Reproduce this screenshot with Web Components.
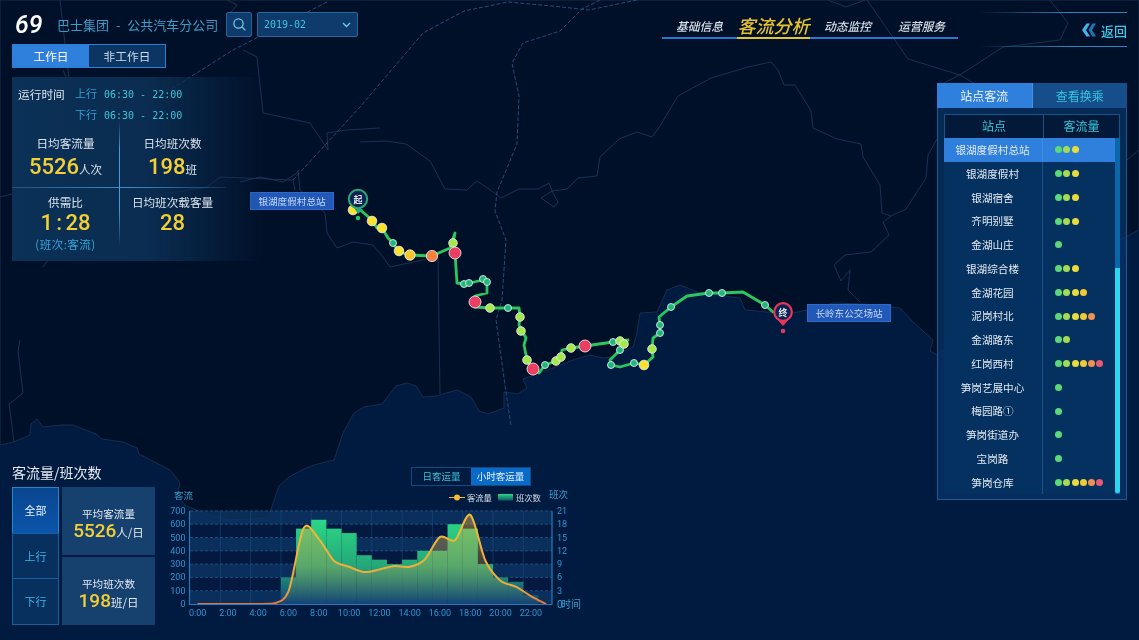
<!DOCTYPE html>
<html lang="zh">
	<head>
		<meta charset="utf-8">
		<title>69 客流分析</title>
		<style>
			html, body {
				margin: 0;
				padding: 0;
				background: #001a40;
			}
		</style>
	</head>

	<body>
		<bus-dashboard>
			<route-map slot="map"></route-map>

			<div slot="left-top">
				<line-header line="69" company="巴士集团 - 公共汽车分公司" month="2019-02"></line-header>
				<day-tabs></day-tabs>
				<info-panel></info-panel>
			</div>

			<flow-summary slot="left-bottom"></flow-summary>
			<flow-chart slot="left-bottom"></flow-chart>

			<top-nav slot="right-top"></top-nav>
			<back-link slot="right-top"></back-link>

			<station-panel slot="right">
				<station-row name="银湖度假村总站" level="3" active></station-row>
				<station-row name="银湖度假村" level="3"></station-row>
				<station-row name="银湖宿舍" level="3"></station-row>
				<station-row name="齐明别墅" level="3"></station-row>
				<station-row name="金湖山庄" level="1"></station-row>
				<station-row name="银湖综合楼" level="3"></station-row>
				<station-row name="金湖花园" level="4"></station-row>
				<station-row name="泥岗村北" level="5"></station-row>
				<station-row name="金湖路东" level="2"></station-row>
				<station-row name="红岗西村" level="6"></station-row>
				<station-row name="笋岗艺展中心" level="1"></station-row>
				<station-row name="梅园路①" level="1"></station-row>
				<station-row name="笋岗街道办" level="1"></station-row>
				<station-row name="宝岗路" level="1"></station-row>
				<station-row name="笋岗仓库" level="6"></station-row>
			</station-panel>
		</bus-dashboard>
	</body>

	<script>
		const FONT = '"Noto Sans CJK SC", "Liberation Sans", sans-serif';
		const NUM_FONT = 'Roboto, "Liberation Sans", "Noto Sans CJK SC", sans-serif';
		const MONO_FONT = '"DejaVu Sans Mono", "Liberation Mono", monospace';

		class BusDashboard extends HTMLElement {
			constructor() {
				super();
				this.attachShadow({ mode: 'open' }).innerHTML = `
					<style>
						:host {
							display: block;
							position: relative;
							width: 1139px;
							height: 640px;
							overflow: hidden;
							font-family: ${FONT};
							color: #e4ebf2;
							outline: 1px solid #8a9098;
							outline-offset: -1px;
							filter: blur(0.4px);
						}
						.page {
							position: relative;
							box-sizing: border-box;
							height: 640px;
							padding: 12px 12px 15px;
							display: flex;
							justify-content: space-between;
						}
						.left {
							display: flex;
							flex-direction: column;
							justify-content: space-between;
						}
						.bottom {
							display: flex;
							align-items: flex-end;
							gap: 10px;
						}
						.right {
							width: 465px;
							display: flex;
							flex-direction: column;
							align-items: flex-end;
						}
						.right-top {
							align-self: stretch;
							display: flex;
							justify-content: space-between;
							margin-bottom: 36px;
						}
					</style>
					<slot name="map"></slot>
					<div class="page">
						<div class="left">
							<div><slot name="left-top"></slot></div>
							<div class="bottom"><slot name="left-bottom"></slot></div>
						</div>
						<div class="right">
							<div class="right-top"><slot name="right-top"></slot></div>
							<slot name="right"></slot>
						</div>
					</div>
				`;
			}
		}

		class LineHeader extends HTMLElement {
			connectedCallback() {
				this.attachShadow({ mode: 'open' }).innerHTML = `
					<style>
						:host {
							display: flex;
							align-items: center;
							height: 25px;
						}
						.line {
							width: 45px;
							padding-left: 3px;
							box-sizing: border-box;
							font: italic 500 25px ${NUM_FONT};
							color: #fff;
						}
						.company {
							width: 169px;
							font-size: 13px;
							word-spacing: 4px;
							white-space: pre;
							color: #3a9cc8;
						}
						button {
							box-sizing: border-box;
							height: 25px;
							background: #0e3b6c;
							border: 1px solid #23679f;
							border-radius: 2px;
							padding: 0;
							display: flex;
							align-items: center;
						}
						.search {
							width: 26px;
							justify-content: center;
							margin-right: 5px;
						}
						.month {
							width: 101px;
							justify-content: space-between;
							padding: 0 6px;
							font: 10px ${MONO_FONT};
							color: #3cc6e2;
						}
					</style>
					<div class="line">${this.getAttribute('line')}</div>
					<div class="company">${this.getAttribute('company')}</div>
					<button class="search">
						<svg width="15" height="15" viewBox="0 0 15 15" fill="none" stroke="#6fc6ea" stroke-width="1.3">
							<circle cx="6.5" cy="6.5" r="4.6"></circle>
							<path d="M10 10l3.4 3.4"></path>
						</svg>
					</button>
					<button class="month">
						<span>${this.getAttribute('month')}</span>
						<svg width="9" height="6" viewBox="0 0 9 6" fill="none" stroke="#6fc6ea" stroke-width="1.4">
							<path d="M1 1l3.5 3.5L8 1"></path>
						</svg>
					</button>
				`;
			}
		}

		class DayTabs extends HTMLElement {
			constructor() {
				super();
				this.attachShadow({ mode: 'open' }).innerHTML = `
					<style>
						:host {
							display: flex;
							box-sizing: border-box;
							width: 154px;
							height: 24px;
							margin-top: 7px;
							border: 1px solid #2c7fd6;
							font-size: 11.7px;
							line-height: 22px;
							text-align: center;
						}
						div {
							flex: 1;
							background: #0c3563;
							color: #c8dcec;
						}
						.on {
							background: #2f7fdc;
							color: #fff;
						}
					</style>
					<div class="on">工作日</div>
					<div>非工作日</div>
				`;
			}
		}

		class StatCell extends HTMLElement {
			connectedCallback() {
				const note = this.getAttribute('note');
				this.attachShadow({ mode: 'open' }).innerHTML = `
					<style>
						:host {
							display: block;
							text-align: center;
						}
						.label {
							font-size: 11.6px;
							line-height: 16px;
							color: #dbe5ee;
						}
						.value {
							margin-top: var(--value-gap, 0);
							font: 500 22px/26px ${NUM_FONT};
							word-spacing: -2px;
							color: #f3cf35;
							white-space: nowrap;
						}
						.unit {
							font: 11.5px ${FONT};
							color: #dbe5ee;
						}
						.note {
							font-size: 11.5px;
							letter-spacing: .5px;
							line-height: 16px;
							color: #36a4d6;
						}
					</style>
					<div class="label">${this.getAttribute('label')}</div>
					<div class="value">${this.getAttribute('value')}<span class="unit">${this.getAttribute('unit') || ''}</span></div>
					${note ? `<div class="note">${note}</div>` : ''}
				`;
			}
		}

		class InfoPanel extends HTMLElement {
			constructor() {
				super();
				this.attachShadow({ mode: 'open' }).innerHTML = `
					<style>
						:host {
							display: block;
							position: relative;
							box-sizing: border-box;
							width: 250px;
							height: 184px;
							margin-top: 9px;
							padding: 6px 0 0 6px;
							background: linear-gradient(90deg, #0b3156 0%, #0a2c50 55%, rgba(8, 36, 70, 0) 100%);
							font-size: 11px;
						}
						.time {
							display: grid;
							grid-template-columns: 57px auto;
							grid-auto-rows: 21px;
							line-height: 21px;
						}
						.time b {
							font-weight: 400;
							font-size: 11.7px;
							color: #dbe5ee;
						}
						.time span {
							grid-column: 2;
							color: #2f9bd0;
						}
						.time i {
							font: normal 10px/21px ${MONO_FONT};
							color: #3cc6da;
							margin-left: 7px;
						}
						.stats {
							position: absolute;
							left: 0;
							top: 44px;
							width: 214px;
							display: grid;
							grid-template-columns: 107px 107px;
							grid-template-rows: 66px 74px;
							background:
								linear-gradient(180deg, rgba(80, 160, 220, 0), #4a9ad4 22%, #4a9ad4 70%, rgba(80, 160, 220, 0)) 107px 0 / 1px 126px no-repeat,
								linear-gradient(90deg, rgba(80, 160, 220, .3), #3f8cc8 50%, rgba(80, 160, 220, 0)) 0 66px / 236px 1px no-repeat;
						}
						stat-cell {
							padding-top: 14px;
							--value-gap: 3px;
						}
						stat-cell:nth-child(n + 3) {
							padding-top: 7px;
							--value-gap: 0;
						}
					</style>
					<div class="time">
						<b>运行时间</b>
						<span style="grid-row:1">上行<i>06:30 - 22:00</i></span>
						<span>下行<i>06:30 - 22:00</i></span>
					</div>
					<div class="stats">
						<stat-cell label="日均客流量" value="5526" unit="人次"></stat-cell>
						<stat-cell label="日均班次数" value="198" unit="班"></stat-cell>
						<stat-cell label="供需比" value="1 : 28" note="(班次:客流)"></stat-cell>
						<stat-cell label="日均班次载客量" value="28"></stat-cell>
					</div>
				`;
			}
		}

		class TopNav extends HTMLElement {
			constructor() {
				super();
				this.attachShadow({ mode: 'open' }).innerHTML = `
					<style>
						:host {
							display: flex;
							width: 296px;
							height: 27px;
							font-style: italic;
							font-size: 11.8px;
							font-weight: 500;
							text-align: center;
							line-height: 28px;
							color: #d6dee6;
						}
						div {
							box-sizing: border-box;
							width: 75px;
							border-bottom: 2px solid #2b77d0;
							white-space: nowrap;
						}
						.on {
							width: 73px;
							font-size: 18px;
							line-height: 27px;
							color: #e6c22c;
							border-bottom-color: #e6c22c;
						}
						.last {
							width: 73px;
						}
					</style>
					<div>基础信息</div>
					<div class="on">客流分析</div>
					<div>动态监控</div>
					<div class="last">运营服务</div>
				`;
			}
		}

		class BackLink extends HTMLElement {
			constructor() {
				super();
				this.attachShadow({ mode: 'open' }).innerHTML = `
					<style>
						:host {
							display: flex;
							box-sizing: border-box;
							width: 147px;
							height: 35px;
							align-items: center;
							justify-content: flex-end;
							gap: 5px;
							border-style: solid;
							border-width: 1px 0;
							border-image: linear-gradient(90deg, rgba(40, 130, 190, 0), #2a86bc 60%) 1;
							font-size: 13px;
							font-weight: 500;
							color: #3cc8e8;
							padding-top: 1px;
						}
					</style>
					<svg width="14" height="14" viewBox="0 0 14 14">
						<path d="M10.500 .5H14L10 7l4 6.500h-3.500L6.500 7z" fill="#1b78b8"></path>
						<path d="M4.500 .5H8L4 7l4 6.500H4.500L0 7z" fill="#45b4ea"></path>
					</svg>
					<span>返回</span>
				`;
			}
		}

		class StationRow extends HTMLElement {
			connectedCallback() {
				const colors = ['#5bd877', '#a4dc50', '#e9dc38', '#f3c836', '#ee9450', '#e65a72'];
				const level = parseInt(this.getAttribute('level'));
				const dots = colors.slice(0, level).map((c) => `<i style="background:${c}"></i>`).join('');
				this.attachShadow({ mode: 'open' }).innerHTML = `
					<style>
						:host {
							display: flex;
							height: 23.75px;
							line-height: 23.75px;
							font-size: 10.6px;
							color: #e2e9f0;
						}
						:host([active]) {
							background: #2f7fdc;
						}
						.name {
							box-sizing: border-box;
							width: 99px;
							padding-right: 1px;
							text-align: center;
							border-right: 1px solid #14568c;
						}
						:host([active]) .name {
							border-right-color: #3e8ce4;
						}
						.dots {
							display: flex;
							align-items: center;
							gap: 1.300px;
							padding-left: 12px;
						}
						i {
							width: 7px;
							height: 7px;
							border-radius: 50%;
						}
					</style>
					<div class="name">${this.getAttribute('name')}</div>
					<div class="dots">${dots}</div>
				`;
			}
		}

		class StationPanel extends HTMLElement {
			constructor() {
				super();
				this.attachShadow({ mode: 'open' }).innerHTML = `
					<style>
						:host {
							display: block;
							box-sizing: border-box;
							width: 190px;
							height: 417px;
							background: rgba(9, 52, 104, .72);
							border: 1px solid #1b5a92;
							border-top: 0;
							font-size: 12px;
						}
						.tabs {
							display: flex;
							height: 25px;
							line-height: 25px;
							text-align: center;
							margin: 0 -1px;
						}
						.tabs div {
							flex: 1;
							background: #164e8c;
							color: #36c4e0;
						}
						.tabs .on {
							background: #2f7fdc;
							color: #f0f6fc;
							border-right: 1px solid #3f95ea;
						}
						.table {
							position: relative;
							margin: 6px 6px 0;
							height: 380px;
							background: #04315f;
							overflow: hidden;
						}
						.head {
							display: flex;
							box-sizing: border-box;
							height: 24px;
							line-height: 22px;
							background: #03193a;
							border: 1px solid #14568c;
							border-bottom: 0;
							text-align: center;
							color: #38c6d8;
						}
						.head div:first-child {
							width: 98px;
							border-right: 1px solid #14568c;
						}
						.head div:last-child {
							flex: 1;
						}
						.bar {
							position: absolute;
							top: 24px;
							right: 0;
							width: 5px;
							height: 356px;
							background: #0a68aa;
						}
						.bar i {
							position: absolute;
							left: 0;
							right: 0;
							top: 130px;
							bottom: 1px;
							background: #2cd6ee;
							border-radius: 0 0 2px 2px;
						}
					</style>
					<div class="tabs">
						<div class="on">站点客流</div>
						<div>查看换乘</div>
					</div>
					<div class="table">
						<div class="head"><div>站点</div><div>客流量</div></div>
						<div class="rows"><slot></slot></div>
						<div class="bar"><i></i></div>
					</div>
				`;
			}
		}

		class FlowSummary extends HTMLElement {
			constructor() {
				super();
				this.attachShadow({ mode: 'open' }).innerHTML = `
					<style>
						:host {
							display: block;
							width: 143px;
						}
						h2 {
							margin: 0 0 5px;
							font-size: 14px;
							font-weight: 400;
							line-height: 20px;
							color: #e4ebf2;
						}
						.body {
							display: flex;
							gap: 3px;
						}
						.dirs {
							width: 47px;
							display: flex;
							flex-direction: column;
						}
						.dirs div {
							flex: 1;
							box-sizing: border-box;
							height: 46px;
							line-height: 44px;
							text-align: center;
							font-size: 11px;
							color: #3fb4e2;
							background: #07305f;
							border: 1px solid #175f9f;
							margin-top: -1px;
						}
						.dirs div:first-child {
							margin-top: 0;
						}
						.dirs .on {
							background: linear-gradient(180deg, #0a4690, #0b55aa);
							border-color: #2487cc;
							color: #e8f2fa;
						}
						.cards {
							flex: 1;
							display: flex;
							flex-direction: column;
							gap: 2px;
						}
						.card {
							height: 68px;
							background: #16416f;
							text-align: center;
							font-size: 10.600px;
							color: #e0e8f0;
							padding-top: 19px;
							box-sizing: border-box;
						}
						.card b {
							display: block;
							font: 500 19px/20px ${NUM_FONT};
							color: #f3cf35;
						}
						.card b span {
							font: 11.500px ${FONT};
							color: #e0e8f0;
						}
					</style>
					<h2>客流量/班次数</h2>
					<div class="body">
						<div class="dirs">
							<div class="on">全部</div>
							<div>上行</div>
							<div>下行</div>
						</div>
						<div class="cards">
							<div class="card">平均客流量<b>5526<span>人/日</span></b></div>
							<div class="card">平均班次数<b>198<span>班/日</span></b></div>
						</div>
					</div>
				`;
			}
		}

		class FlowChart extends HTMLElement {
			constructor() {
				super();
				const x0 = 190, step = 15.15, yBase = 604, perHundred = 13.3;
				const bars = [0, 0, 0, 0, 0, 0, 6, 17, 19, 17, 16, 11, 10, 9, 10, 12, 12, 18, 17, 9, 6, 5, 2, 0];
				const flow = [0, 0, 0, 0, 0, 3, 95, 570, 490, 325, 280, 240, 260, 285, 280, 335, 505, 480, 670, 325, 175, 130, 60, 0];
				const xAt = (i) => x0 + step * (i + 0.5);
				const yAt = (v) => yBase - v / 100 * perHundred;

				let grid = '';
				for (let k = 0; k < 7; k++) {
					if (k % 2 === 0) {
						grid += `<rect x="${x0}" y="${yAt((k + 1) * 100)}" width="362" height="${perHundred}" fill="#0c3463" fill-opacity=".8"></rect>`;
					} else {
						grid += `<rect x="${x0}" y="${yAt((k + 1) * 100)}" width="362" height="${perHundred}" fill="#03193f"></rect>`;
					}
				}
				for (let k = 1; k <= 7; k++) {
					grid += `<path d="M${x0} ${yAt(k * 100)}H552" stroke="#3f7fb4" stroke-opacity=".6" stroke-dasharray="3 2" stroke-width=".8"></path>`;
				}
				for (let k = 1; k < 12; k++) {
					grid += `<path d="M${x0 + step * 2 * k} 511V604" stroke="#1f5a90" stroke-opacity=".5" stroke-width=".8"></path>`;
				}

				const barRects = bars.map((b, i) => b === 0 ? '' :
					`<rect x="${x0 + step * i}" y="${yAt(b / 3 * 100)}" width="${step}" height="${yBase - yAt(b / 3 * 100)}" fill="url(#barFill)"></rect>`).join('');

				// catmull-rom through the hourly values
				const pts = flow.map((v, i) => [xAt(i), yAt(v)]);
				let d = `M${pts[0][0]} ${pts[0][1]}`;
				for (let i = 0; i < pts.length - 1; i++) {
					const p0 = pts[Math.max(i - 1, 0)], p1 = pts[i], p2 = pts[i + 1], p3 = pts[Math.min(i + 2, pts.length - 1)];
					const s = 0.15;
					let c1y = p1[1] + (p2[1] - p0[1]) * s, c2y = p2[1] - (p3[1] - p1[1]) * s;
					c1y = Math.min(c1y, yBase);
					c2y = Math.min(c2y, yBase);
					d += `C${p1[0] + (p2[0] - p0[0]) * s} ${c1y} ${p2[0] - (p3[0] - p1[0]) * s} ${c2y} ${p2[0]} ${p2[1]}`;
				}
				const area = `${d}L${pts[23][0]} ${yBase}L${pts[0][0]} ${yBase}Z`;

				const leftLabels = [0, 1, 2, 3, 4, 5, 6, 7].map((k) =>
					`<text x="185.500" y="${yAt(k * 100) + 3}" text-anchor="end">${k * 100}</text>`).join('');
				const rightLabels = [1, 2, 3, 4, 5, 6, 7].map((k) =>
					`<text x="557" y="${yAt(k * 100) + 3}">${k * 3}</text>`).join('');
				let hours = '';
				for (let h = 0; h < 24; h += 2) {
					hours += `<text x="${xAt(h)}" y="616" text-anchor="middle">${h}:00</text>`;
				}

				this.attachShadow({ mode: 'open' }).innerHTML = `
					<style>
						:host {
							display: block;
							width: 420px;
						}
						.toggle {
							display: flex;
							box-sizing: border-box;
							width: 120px;
							height: 19px;
							margin-left: 246px;
							border: 1px solid #0f4c82;
							font-size: 9.5px;
							line-height: 17px;
							text-align: center;
							color: #38c6d8;
						}
						.toggle div {
							flex: 1;
						}
						.toggle .on {
							background: #0a6ac8;
							color: #e6f4fc;
						}
						svg {
							display: block;
							font: 9px ${NUM_FONT};
						}
						text {
							fill: #2f96d0;
						}
						.zh {
							font: 9.500px ${FONT};
							fill: #3a9ccf;
						}
						.legend {
							font: 8.300px ${FONT};
							fill: #d4dee8;
						}
					</style>
					<div class="toggle">
						<div>日客运量</div>
						<div class="on">小时客运量</div>
					</div>
					<svg width="420" height="139" viewBox="165 486 420 139">
						<defs>
							<linearGradient id="barFill" gradientUnits="userSpaceOnUse" x1="0" y1="520" x2="0" y2="604">
								<stop offset="0" stop-color="#2bd684"></stop>
								<stop offset=".55" stop-color="#24a77a"></stop>
								<stop offset="1" stop-color="#0d3f78"></stop>
							</linearGradient>
							<linearGradient id="areaFill" gradientUnits="userSpaceOnUse" x1="0" y1="515" x2="0" y2="604">
								<stop offset="0" stop-color="#e6a83e" stop-opacity=".46"></stop>
								<stop offset=".6" stop-color="#e6a83e" stop-opacity=".26"></stop>
								<stop offset="1" stop-color="#e6a83e" stop-opacity=".03"></stop>
							</linearGradient>
							<linearGradient id="lineStroke" gradientUnits="userSpaceOnUse" x1="0" y1="520" x2="0" y2="604">
								<stop offset="0" stop-color="#f2bb34"></stop>
								<stop offset=".8" stop-color="#f0a83a"></stop>
								<stop offset="1" stop-color="#e8763c"></stop>
							</linearGradient>
							<linearGradient id="legendBar" x1="0" y1="0" x2="0" y2="1">
								<stop offset="0" stop-color="#2bd684"></stop>
								<stop offset="1" stop-color="#0d5a66"></stop>
							</linearGradient>
						</defs>
						${grid}
						${barRects}
						<path d="${area}" fill="url(#areaFill)"></path>
						<path d="${d}" fill="none" stroke="url(#lineStroke)" stroke-width="2"></path>
						<path d="M189.500 511V604.500H552M552 511V604.500" fill="none" stroke="#2a78b8" stroke-width="1.200"></path>
						<text class="zh" x="174" y="499">客流</text>
						<text class="zh" x="549" y="498">班次</text>
						${leftLabels}
						${rightLabels}
						${hours}
						<text x="557" y="607.500" font-size="10">0</text>
						<text class="zh" x="561" y="608" style="font-size:10px">时间</text>
						<path d="M449 497.500H465" stroke="#f2bb34"></path>
						<circle cx="457" cy="497.500" r="3" fill="#f2bb34"></circle>
						<text class="legend" x="467" y="500.500">客流量</text>
						<rect x="498" y="494" width="15" height="6.500" fill="url(#legendBar)"></rect>
						<text class="legend" x="516" y="500.500">班次数</text>
					</svg>
				`;
			}
		}

		class RouteMap extends HTMLElement {
			constructor() {
				super();
				const coast = '0,445 14,442 30,435 31,424 37,419 43,427 61,425 73,425 96,434 102,439 123,442 137,448 139,454 170,470 179,481 180,485 176,495 186,506 207,514 229,520 268,518 279,486 289,477 304,469 314,465 334,460 337,451 343,433 354,413 364,407 382,404 396,386 407,383 416,386 423,397 436,396 457,390 471,397 479,411 488,414 504,408 504,392 518,394 527,388 523,379 540,373 573,360 590,355 603,358 612,357 633,347 637,333 640,313 657,312 667,290 680,285 700,293 740,298 745,310 767,312 793,313 807,310 833,303 862,304 900,308 913,322 933,340 930,351 937,355 955,340 1000,300 1080,260 1139,230 1139,0 0,0';
				const solid = [
					'360,142 386,141 406,144 430,161 445,189 467,190 477,181 489,189 501,198 519,189 538,189 549,183 552,191 541,198 554,207 558,202 552,191 567,189 578,178 597,176 600,157 619,139 637,132 652,137 660,126 678,96 711,78 748,67 771,62 778,70 784,85 795,85 811,111 813,128 837,139 861,144 863,157 880,185 882,213 891,216 906,209 926,178 928,155 937,139',
					'891,216 883,222 889,235 871,252 845,255 834,265 841,281 850,270 848,290 860,302',
					'828,0 846,7 865,0',
					'867,0 908,59 960,75 985,90',
					'1050,0 1068,23 1060,40 1003,47 963,73 940,85',
					'325,213 327,233 337,248 353,242 373,245 383,257 390,267 437,257',
					'438,258 440,394',
					'240,182 260,177 283,182 297,173 298,170',
					'298,170 300,190 325,213',
					'380,128 347,130 327,133 328,150 310,123 263,113 257,57 243,50',
					'227,0 237,5 230,13',
					'120,120 120,147 133,163 123,187 147,197 207,187 220,177 293,180 295,190',
					'0,197 40,187',
					'43,267 50,257',
					'18,351 23,393 9,404 14,442',
					'18,351 20,340',
					'60,0 70,87 63,70',
					'1127,160 1139,150'
				];
				const dashed = [
					'293,180 360,107 423,33 464,11 508,2 552,6 589,10 637,0',
					'600,0 582,9 560,31 523,43 512,63 519,96 517,144 497,192 495,211 506,240 502,300 496,320 505,385 511,426',
					'327,2 233,50 130,115'
				];
				const route = '358,208 372,220 377,228 382,228 388,238 393,243 399,252 410,255 432,256 450,248 455,233 453,243 455,253 457,283 465,284 483,280 487,282 487,293 475,296 475,307 490,308 508,308 519,308 520,317 519,325 522,331 526,338 524,345 527,360 532,369 539,373 545,365 556,361 561,357 562,350 571,348 585,346 613,342 628,340 624,344 620,350 610,360 611,365 620,367 634,363 644,365 653,357 652,349 653,338 660,333 660,325 659,317 671,307 687,296 709,293 722,293 743,292 765,305 773,312';
				const stops = [
					// r, fill, points
					[3.5, '#1fb87a', '393,243 464,284 469,283 483,279 487,282 508,308 545,365 613,342 620,350 611,365 634,363 660,325 660,333 671,307 709,293 722,293 765,305'],
					[4.3, '#a4e84e', '453,243 490,308 520,317 521,331 527,360 556,361 561,357 571,348 620,341 624,344 652,349'],
					[4.8, '#fbe22e', '353,210 372,221 382,228 399,251 644,365'],
					[5.2, '#fcc52e', '410,255'],
					[5.6, '#f8803e', '432,256'],
					[6, '#ea3f62', '455,253 475,302 533,369 585,346']
				];
				const poly = (p, cls) => `<polyline class="${cls}" points="${p}"></polyline>`;
				let stopMarks = '';
				stops.forEach(([r, fill, list]) => {
					list.split(' ').forEach((p) => {
						const [x, y] = p.split(',');
						stopMarks += `<circle cx="${x}" cy="${y}" r="${r}" fill="${fill}" stroke="#e9eef2" stroke-opacity=".85" stroke-width="1"></circle>`;
					});
				});

				this.attachShadow({ mode: 'open' }).innerHTML = `
					<style>
						:host {
							display: block;
							position: absolute;
							left: 0;
							top: 0;
						}
						svg {
							display: block;
							background: #001a40;
						}
						polyline {
							fill: none;
							stroke-linejoin: round;
						}
						.solid {
							stroke: #1d3557;
							stroke-width: .9;
						}
						.dash {
							stroke: #2a4a78;
							stroke-width: 1;
							stroke-dasharray: 4 2;
						}
						.route {
							stroke: #2bc860;
							stroke-width: 2.800;
							stroke-linecap: round;
						}
						text {
							font-family: ${FONT};
							fill: #dbe6f4;
							text-anchor: middle;
						}
						.tag {
							font-size: 9.600px;
							fill: #c4d8f2;
						}
					</style>
					<svg width="1139" height="640" viewBox="0 0 1139 640">
						<polygon points="${coast}" fill="#011029" stroke="#1d3557" stroke-width=".8"></polygon>
						${solid.map((p) => poly(p, 'solid')).join('')}
						${dashed.map((p) => poly(p, 'dash')).join('')}
						${poly(route, 'route')}
						<circle cx="358" cy="218" r="2.200" fill="#2bc860"></circle>
						${stopMarks}

						<path d="M354 208l4 6 5-5z" fill="#2aa878"></path>
						<circle cx="358" cy="199" r="9.200" fill="#0f2350" stroke="#2aa878" stroke-width="2"></circle>
						<text x="358" y="202.500" font-size="9" font-weight="700">起</text>

						<path d="M775.500 317L783 325.500L790.500 317" fill="#e8355a" stroke="#e8355a" stroke-linejoin="round"></path>
						<circle cx="783" cy="312" r="8.800" fill="#0f2350" stroke="#e8355a" stroke-width="2.200"></circle>
						<circle cx="783" cy="331" r="2.300" fill="#e8355a"></circle>
						<text x="783" y="315.500" font-size="9" font-weight="700">终</text>

						<rect x="250.500" y="192.500" width="83" height="17" fill="#2259b8" stroke="#2c6cc8"></rect>
						<text class="tag" x="292" y="205">银湖度假村总站</text>
						<rect x="807.500" y="304.500" width="83" height="17" fill="#2259b8" stroke="#2c6cc8"></rect>
						<text class="tag" x="849" y="317">长岭东公交场站</text>
					</svg>
				`;
			}
		}

		customElements.define('stat-cell', StatCell);
		customElements.define('line-header', LineHeader);
		customElements.define('day-tabs', DayTabs);
		customElements.define('info-panel', InfoPanel);
		customElements.define('top-nav', TopNav);
		customElements.define('back-link', BackLink);
		customElements.define('station-row', StationRow);
		customElements.define('station-panel', StationPanel);
		customElements.define('flow-summary', FlowSummary);
		customElements.define('flow-chart', FlowChart);
		customElements.define('route-map', RouteMap);
		customElements.define('bus-dashboard', BusDashboard);
	</script>
</html>
